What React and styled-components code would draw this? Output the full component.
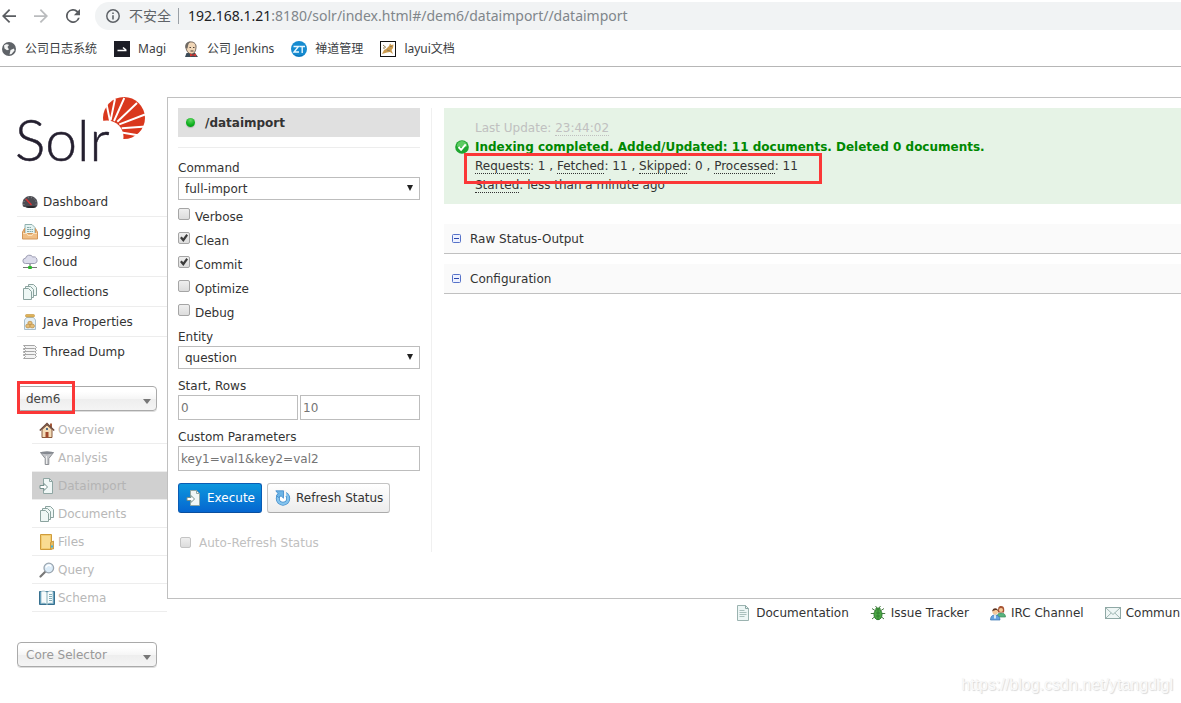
import React from "react";
import styled, { createGlobalStyle, css } from "styled-components";

const GlobalStyle = createGlobalStyle`
  *, *::before, *::after { box-sizing: border-box; }
  body {
    margin: 0;
    background: #fff;
    color: #333;
    font: 12px/16px "DejaVu Sans", Verdana, sans-serif;
    overflow-x: hidden;
  }
  a { color: inherit; text-decoration: none; }
  ul { list-style: none; margin: 0; padding: 0; }
  svg { display: block; flex: none; }
`;

/* ---------- browser chrome ---------- */

const Page = styled.div`
  position: relative;
  min-height: 100vh;
  overflow: hidden;
`;

const Toolbar = styled.header`
  display: flex;
  align-items: center;
  gap: 15px;
  height: 32px;
  padding-left: 2px;
`;

const NavButtons = styled.div`
  display: flex;
  gap: 18px;
`;

const ChromeButton = styled.button`
  width: 14px;
  height: 14px;
  padding: 0;
  border: 0;
  background: none;
  color: ${(p) => (p.disabled ? "#babcbe" : "#5a5d61")};
`;

const AddressBar = styled.div`
  display: flex;
  flex: 1;
  align-items: center;
  height: 28px;
  padding-left: 11px;
  border-radius: 14px 0 0 14px;
  background: #f1f3f4;
  color: #5f6368;
  font: 14px/20px "Noto Sans", "Noto Sans CJK SC", sans-serif;
  white-space: nowrap;
`;

const Insecure = styled.span`
  margin-left: 9px;
  padding-right: 7px;
`;

const Divider = styled.span`
  width: 1px;
  height: 16px;
  margin-right: 9px;
  background: #9aa0a6;
`;

const Url = styled.span`
  color: #80868b;
  b { color: #202124; font-weight: 400; }
`;

const Bookmarks = styled.nav`
  display: flex;
  align-items: center;
  gap: 17px;
  height: 35px;
  padding: 0 1px;
  border-bottom: 1px solid #b6b6b6;
  color: #3c4043;
  font: 12px/16px "Noto Sans", "Noto Sans CJK SC", sans-serif;
  white-space: nowrap;
`;

const Bookmark = styled.a`
  display: flex;
  align-items: center;
  gap: 8px;
`;

/* ---------- layout ---------- */

const Main = styled.div`
  display: flex;
  align-items: flex-start;
  padding: 30px 0 0 17px;
`;

const Sidebar = styled.aside`
  flex: none;
  width: 150px;
`;

const LogoLink = styled.a`
  display: block;
  height: 90px;
`;

const MenuItem = styled.li`
  height: 30px;
  border-bottom: 1px solid #ededed;
  &:last-child { border-bottom: 0; }
  a {
    display: flex;
    align-items: center;
    gap: 5px;
    height: 29px;
    padding-left: 5px;
  }
`;

const CorePicker = styled.div`
  position: relative;
  width: 140px;
  margin-top: ${(p) => p.$gap}px;
  &::after {
    content: "";
    position: absolute;
    right: 6px;
    top: 13px;
    border: 4px solid transparent;
    border-top: 5px solid #777;
    border-bottom: 0;
    pointer-events: none;
  }
`;

const CoreSelect = styled.select`
  display: block;
  width: 100%;
  height: 25px;
  padding: 0 8px;
  appearance: none;
  border: 1px solid #aaa;
  border-radius: 4px;
  background: linear-gradient(#fff 20%, #f6f6f6 50%, #eee 52%, #f4f4f4 100%);
  box-shadow: 0 1px 0 #ddd;
  color: ${(p) => (p.$muted ? "#999" : "#444")};
  font: inherit;
`;

const Highlight = styled.span`
  position: absolute;
  left: ${(p) => p.$left}px;
  top: ${(p) => p.$top}px;
  width: ${(p) => p.$width}px;
  height: ${(p) => p.$height}px;
  border: 3px solid #fb3737;
  pointer-events: none;
  z-index: 1;
`;

const SubMenu = styled.ul`
  margin: 5px 0 0 15px;
`;

const SubItem = styled.li`
  height: 28px;
  border-bottom: 1px solid #ededed;
  background: ${(p) => (p.$active ? "#d0d0d0" : "transparent")};
  color: ${(p) => (p.$active ? "#b4b4b4" : "#b8b8b8")};
  a {
    display: flex;
    align-items: center;
    gap: 3px;
    height: 27px;
    padding-left: 7px;
  }
`;

const ContentColumn = styled.div`
  flex: 1;
  min-width: 0;
`;

const Content = styled.main`
  display: flex;
  align-items: flex-start;
  padding: 10px 0 46px 10px;
  border: 1px solid #c0c0c0;
  border-right: 0;
`;

/* ---------- import form ---------- */

const Form = styled.form`
  flex: none;
  width: 254px;
  padding-right: 11px;
  border-right: 1px solid #f0f0f0;
`;

const Handler = styled.h1`
  display: flex;
  align-items: center;
  gap: 10px;
  height: 29px;
  margin: 0;
  padding-left: 8px;
  background: #e0e0e0;
  font-size: 12px;
  line-height: 16px;
`;

const Led = styled.span`
  width: 9px;
  height: 9px;
  border-radius: 50%;
  background: radial-gradient(circle at 50% 25%, #63d663, #0cae1d 60%, #078a14);
  box-shadow: 0 1px 1px #b5b5b5;
`;

const Rule = styled.hr`
  height: 1px;
  margin: 10px 0 9px;
  border: 0;
  background: #ededed;
`;

const Label = styled.label`
  display: block;
  margin-top: ${(p) => p.$gap || 0}px;
  padding-top: 2px;
  line-height: 18px;
`;

const SelectBox = styled.div`
  position: relative;
  &::after {
    content: "";
    position: absolute;
    right: 7px;
    top: 8px;
    border: 3px solid transparent;
    border-top: 6px solid #222;
    border-bottom: 0;
    pointer-events: none;
  }
`;

const field = css`
  display: block;
  width: 100%;
  border: 1px solid #bdbdbd;
  border-radius: 0;
  background: #fff;
  color: #333;
  font: inherit;
`;

const Select = styled.select`
  ${field}
  height: 23px;
  padding: 0 6px;
  appearance: none;
`;

const Input = styled.input`
  ${field}
  height: 25px;
  padding: 0 2px;
  &::placeholder { color: #757575; }
`;

const Pair = styled.div`
  display: flex;
  gap: 2px;
`;

const Checks = styled.div`
  padding: 4px 0 2px;
`;

const CheckRow = styled.label`
  display: flex;
  gap: 5px;
  height: 24px;
  line-height: 26px;
`;

const CheckBox = styled.input.attrs({ type: "checkbox" })`
  position: relative;
  flex: none;
  width: ${(p) => (p.$small ? 11 : 12)}px;
  height: ${(p) => (p.$small ? 11 : 12)}px;
  margin: ${(p) => (p.$small ? "0" : "4px 0 0")};
  appearance: none;
  border: 1px solid ${(p) => (p.$small ? "#c4c4c4" : "#a5a5a5")};
  border-radius: 2px;
  background: linear-gradient(#efefef, #dcdcdc);
  &:checked::after {
    content: "";
    position: absolute;
    inset: 1px;
    background: #3c3c3c;
    clip-path: polygon(0 50%, 22% 30%, 40% 52%, 80% 0, 100% 18%, 42% 100%);
  }
`;

const Actions = styled.div`
  display: flex;
  gap: 5px;
  margin-top: 12px;
`;

const Button = styled.button`
  display: flex;
  align-items: center;
  gap: 5px;
  height: 30px;
  padding: 0 6px 0 7px;
  border: 1px solid ${(p) => (p.$primary ? "#0a5cb4" : "#c4c4c4")};
  border-bottom-color: ${(p) => (p.$primary ? "#0a4f9e" : "#ababab")};
  border-radius: 3px;
  background: ${(p) => (p.$primary ? "linear-gradient(#0d97de, #0566d0)" : "linear-gradient(#fff, #ececec)")};
  color: ${(p) => (p.$primary ? "#fff" : "#333")};
  font: inherit;
  white-space: nowrap;
`;

const AutoRefresh = styled.label`
  display: flex;
  align-items: center;
  gap: 8px;
  height: 19px;
  margin-top: 20px;
  padding-left: 2px;
  color: #c0c0c0;
`;

/* ---------- status ---------- */

const Results = styled.section`
  flex: 1;
  min-width: 0;
  padding-left: 12px;
`;

const Status = styled.div`
  position: relative;
  margin-bottom: 20px;
  padding: 10px 10px 10px 11px;
  background: #e6f3e6;
`;

const StatusLine = styled.div`
  display: grid;
  grid-template-columns: 20px 1fr;
  align-items: center;
  height: 19px;
  color: ${(p) => p.$color || "#333"};
  font-weight: ${(p) => (p.$bold ? 700 : 400)};
  white-space: nowrap;
  span { grid-column: 2; }
  abbr {
    border-bottom: 1px dotted currentColor;
    text-decoration: none;
  }
`;

const Panel = styled.a`
  display: flex;
  align-items: center;
  gap: 8px;
  height: 30px;
  margin-bottom: 10px;
  padding-left: 7px;
  border-bottom: 1px solid #c0c0c0;
  background: #fafafa;
`;

const Footer = styled.footer`
  display: flex;
  justify-content: flex-end;
  gap: 21px;
  padding: 6px 1px 0 0;
  white-space: nowrap;
  a {
    display: flex;
    align-items: center;
    gap: 5px;
  }
`;

const Watermark = styled.div`
  position: absolute;
  right: 8px;
  top: 675px;
  color: #fafafa;
  font: 16px/20px "Liberation Sans", Arial, sans-serif;
  text-shadow: 1px 1px 1px #d9d9d9, 0 0 1px #ececec;
`;

/* ---------- icons ---------- */

const Svg = ({ size = 16, box = "0 0 16 16", children }) => (
  <svg width={size} height={size} viewBox={box} aria-hidden="true">{children}</svg>
);

const Sheet = ({ x = 0, y = 0 }) => (
  <path d={`M${x + 0.5} ${y + 0.5}h5l3 3v8h-8z`} fill="#eef7f5" stroke="#8ba39f" />
);

const icons = {
  dashboard: (
    <>
      <path d="M1 12.500C-1 7 3 2 8 2s9 5 7 10.500c-3 1.500-11 1.500-14 0z" fill="#4c4c52" />
      <path d="M2 11C1 6.500 4 3.500 8 3.500S15 6.500 14 11" fill="none" stroke="#8c8c92" strokeDasharray="1 2" />
      <path d="M4 5l5.500 6" stroke="#e03030" strokeWidth="1.400" />
      <ellipse cx="9" cy="13" rx="5" ry="1" fill="#28282c" />
    </>
  ),
  logging: (
    <>
      <path d="M3 .5h7l3 3v7H3z" fill="#e5f3f2" stroke="#8fb0ae" />
      <path d="M5 3.500h4M5 5.500h6M5 7.500h6" stroke="#86aaa8" strokeDasharray="2 .5" />
      <path d="M.5 8L2.500 4.500v5h11v-5l2 3.500v7H.5z" fill="#f0be84" stroke="#d2975a" />
      <path d="M1 9.500h4l1 2h4l1-2h4" fill="none" stroke="#fbe0bb" />
    </>
  ),
  cloud: (
    <>
      <path d="M3.500 9.500a2.600 2.600 0 0 1 0-5.200A4 4 0 0 1 10.800 3a3.300 3.300 0 0 1 1.700 6.500z" fill="#dcdceb" stroke="#9c9cb2" />
      <path d="M8 10v3" stroke="#555" />
      <path d="M1 13.500h14" stroke="#777" />
      <rect x="6" y="12" width="4" height="3" rx="1" fill="#2db52d" />
    </>
  ),
  documents: (
    <>
      <Sheet x={6} y={0} />
      <Sheet x={3} y={2} />
      <Sheet x={1} y={4} />
    </>
  ),
  java: (
    <>
      <path d="M4.500 3.500h7l2 2.500v9.500h-11V6z" fill="#e3eff6" stroke="#a9bfcc" />
      <rect x="3.500" y=".5" width="9" height="2.500" rx="1" fill="#dfb35a" stroke="#c2933d" strokeWidth=".6" />
      <ellipse cx="8" cy="9" rx="2.200" ry="1.700" fill="#e3bd77" stroke="#b98d46" strokeWidth=".7" />
      <ellipse cx="6" cy="12" rx="2.300" ry="1.900" fill="#e3bd77" stroke="#b98d46" strokeWidth=".7" />
      <ellipse cx="10.200" cy="12" rx="2.300" ry="1.900" fill="#e3bd77" stroke="#b98d46" strokeWidth=".7" />
    </>
  ),
  threads: (
    <g fill="#f3f3f3" stroke="#a5a5a5">
      {[1.5, 4.5, 7.5, 10.5].map((y) => (
        <path key={y} d={`M1.500 ${y}h11l2 2-2 2h-11l2-2z`} />
      ))}
    </g>
  ),
  overview: (
    <>
      <path d="M3 7.500v8h10v-8L8 3z" fill="#f3dcb8" stroke="#8a5a3c" />
      <path d="M11 1.500h2v4h-2z" fill="#a45a3a" />
      <path d="M.8 8.500L8 1.500l7.200 7" fill="none" stroke="#6d4a3c" strokeWidth="1.600" />
      <rect x="6.500" y="10" width="3" height="5.500" fill="#a1492c" />
      <rect x="7" y="6" width="2" height="2" fill="#536f8c" />
    </>
  ),
  analysis: (
    <>
      <path d="M1.500 2.500h13L9.800 8.500v6H6.200v-6z" fill="#c3c5c9" stroke="#8d9095" />
      <ellipse cx="8" cy="2.800" rx="6.500" ry="1.500" fill="#858990" />
      <path d="M7.500 6v8" stroke="#eee" />
    </>
  ),
  dataimport: (
    <>
      <path d="M4.500.5h6l3 3v12h-9z" fill="#f0f7f6" stroke="#8fa6a3" />
      <path d="M10.500.5v3h3" fill="none" stroke="#8fa6a3" />
      <path d="M1 7.500h4v-2L8.500 9 5 12.500v-2H1z" fill="#fff" stroke="#74908c" />
    </>
  ),
  files: (
    <>
      <path d="M1.500.5h11v15h-11z" fill="#f3cc70" stroke="#cf9c3c" />
      <path d="M3 2h8v12H3z" fill="#f9dc92" />
      <path d="M11.500 8.500l3-1.500v8h-3z" fill="#e8bd5e" stroke="#c3933a" strokeWidth=".8" />
      <path d="M12 12.500h2" stroke="#3db2e0" strokeWidth="2" />
    </>
  ),
  query: (
    <>
      <path d="M6.500 9.500l-5 5" stroke="#777" strokeWidth="2.200" strokeLinecap="round" />
      <circle cx="9.800" cy="6" r="4.800" fill="#dcecf8" stroke="#9ba6b0" strokeWidth="1.300" />
      <path d="M7 5.500c.8-2.300 3.500-3 5-1" fill="none" stroke="#fff" strokeWidth="1.500" />
    </>
  ),
  schema: (
    <>
      <path d="M.5 1.500h15v13H.5z" fill="#4e93b8" stroke="#37708f" />
      <path d="M2 1.500c3-1 5 0 6 1 1-1 3-2 6-1v12c-3-.7-5-.3-6 1-1-1.300-3-1.700-6-1z" fill="#f6fbfc" stroke="#8cb2c0" strokeWidth=".8" />
      <path d="M8 2.500v12M10 4.500h3M10 6.500h3M10 8.500h3M10 10.500h3" stroke="#83acb6" />
    </>
  ),
  refresh: (
    <>
      <circle cx="8" cy="8.500" r="5.200" fill="#fff" stroke="#3f89c9" strokeWidth="4" />
      <circle cx="8" cy="8.500" r="5.200" fill="none" stroke="#84c4ee" strokeWidth="2.600" />
      <path d="M8.200 0h3v6h-3z" fill="#f4f4f4" />
      <path d="M.8.8h7.700v7.400L6 5.800 3.500 7.500 1.500 5.500l1.500-2z" fill="#6cb4e6" stroke="#3f89c9" strokeWidth=".8" />
    </>
  ),
  success: (
    <>
      <circle cx="8" cy="8" r="7.800" fill="#1ea62f" />
      <path d="M2 7a6 6 0 0 1 12 0c-3 1.500-9 1.500-12 0z" fill="#5ccb62" />
      <path d="M4 8l3 3.300L12.200 5" fill="none" stroke="#fff" strokeWidth="2.200" />
    </>
  ),
  doc: (
    <>
      <path d="M2.500.5h8l3 3v12h-11z" fill="#edf6f5" stroke="#9bb3b0" />
      <path d="M10.500.5v3h3" fill="none" stroke="#8aa6a3" />
      <path d="M4.500 5.500h5M4.500 7.500h7M4.500 9.500h7M4.500 11.500h5" stroke="#a9bfbc" />
    </>
  ),
  bug: (
    <>
      <path d="M2 3.500l3 2M14 3.500l-3 2M.8 8.500H4M15.200 8.500H12M2 14l3-2.500M14 14l-3-2.500M5.500 1L7 3M10.500 1L9 3" stroke="#4a7a45" />
      <ellipse cx="8" cy="9.500" rx="4" ry="5.200" fill="#4ba744" stroke="#2d7a30" />
      <path d="M5 4.800c0-3 6-3 6 0z" fill="#3b8c38" />
      <path d="M8 5v9.500M6 8h4M6 11h4" stroke="#2d7a30" strokeWidth=".8" />
    </>
  ),
  people: (
    <>
      <path d="M7.500 12c-.5-3 1-4 3.500-4s4.500 1 4.500 4z" fill="#58b47f" stroke="#3b8d5d" strokeWidth=".7" />
      <path d="M8 7.500c0-4 0-6.500 3.200-6.500S14.500 4 14 7.500z" fill="#a75332" />
      <circle cx="11" cy="5" r="2" fill="#f5ca9b" />
      <path d="M.5 15c0-3.500 1.500-5 4.500-5s5 1.500 5 5z" fill="#65a2df" stroke="#3873af" strokeWidth=".7" />
      <circle cx="5.200" cy="6.800" r="2.800" fill="#f5ca9b" />
      <path d="M2.200 6.500c0-4.500 6-4.500 6 0-1-2-3-2-6 0z" fill="#5e3420" />
      <path d="M5 10v3.500" stroke="#fff" strokeWidth="1.500" />
    </>
  ),
  mail: (
    <>
      <rect x=".5" y="2.500" width="15" height="11" fill="#eff6f5" stroke="#8fa8a5" />
      <path d="M1 3l7 6.500L15 3M1 13l5.200-5M15 13L9.800 8" fill="none" stroke="#9fb6b3" />
    </>
  ),
  globe: (
    <>
      <circle cx="8" cy="8" r="7" fill="#5f6368" />
      <path d="M3 4.500c2-2 4-1.500 5-.5L6.500 6 8 8.500l-2 .7L3.500 7.500zM9.500 9l3.500-1.500.5 2-3 3.500-2 .5.500-2z" fill="#f4f5f5" />
    </>
  ),
  magi: (
    <>
      <rect width="16" height="16" fill="#1c1d25" />
      <path d="M3.500 9.500h9M9 6.500l3 2.500" fill="none" stroke="#fff" strokeWidth="1.600" />
    </>
  ),
  jenkins: (
    <>
      <path d="M2 16l1.500-4h8.500l3 4z" fill="#3c4b57" />
      <path d="M3 7c-1-8 11-8 10-.5-.2 3-1.500 6.500-4.500 6.500S3.500 10 3 7z" fill="#f0d6b7" stroke="#4f4138" strokeWidth=".8" />
      <path d="M2.500 7C1.500 2 5 .5 8 .6 5 2 5.500 4 4.500 7.500z" fill="#6f6a64" />
      <path d="M6.500 6.500h1.500M10 6.500h1.500M7.500 10h3" stroke="#4f4138" />
      <path d="M7 12.500l3 1.200 3-1.200v3l-3-1-3 1z" fill="#d33833" />
    </>
  ),
  zentao: (
    <>
      <circle cx="8" cy="8" r="8" fill="#168bd0" />
      <path d="M2 12.500a8 8 0 0 0 12 0A9 9 0 0 1 2 12.500z" fill="#075a9e" />
      <path d="M2.500 5.500h5L3 11h5M8.500 5.500h5.500M11.200 5.500V12" fill="none" stroke="#e8f7ff" strokeWidth="1.400" />
    </>
  ),
  layui: (
    <>
      <rect x=".5" y=".5" width="15" height="15" fill="#fff" stroke="#111" />
      <path d="M2 13l2-4 2-1 3-3 1-2.500 1.500 1.500 2-.5-.5 3.500-1.500 2 1.500 4-3-2-3 .5z" fill="#cb9b4e" />
      <path d="M3 4l3 2.500M3 7h2M10 5.500h2M7 9l3 1" stroke="#8d7a52" />
    </>
  ),
};

const Icon = ({ name, size }) => <Svg size={size}>{icons[name]}</Svg>;

const ARROW = "M20 11H7.830l5.590-5.590L12 4l-8 8 8 8 1.410-1.410L7.830 13H20z";

const Logo = () => (
  <svg width="130" height="80" viewBox="0 0 130 80" role="img" aria-label="Solr">
    <circle cx="107" cy="21" r="21" fill="#d9381e" />
    <circle cx="90" cy="40" r="16.500" fill="#fff" />
    <path
      d="M89.700 8L93 24M98 2L93.700 23M107.300 1L97 24M120 6L100.300 24.700M128 17.500L102.300 27.300M129 29.500L104.700 31.300M121 38.200L103 35.300"
      stroke="#fff"
      strokeWidth="1.900"
    />
    <text
      x="-2"
      y="64"
      fontFamily="Lato, sans-serif"
      fontWeight="300"
      fontSize="57"
      fill="#241f2f"
      stroke="#241f2f"
      strokeWidth=".5"
    >
      Solr
    </text>
  </svg>
);

/* ---------- data ---------- */

const bookmarks = [
  ["globe", "公司日志系统"],
  ["magi", "Magi"],
  ["jenkins", "公司 Jenkins"],
  ["zentao", "禅道管理"],
  ["layui", "layui文档"],
];

const menu = [
  ["dashboard", "Dashboard"],
  ["logging", "Logging"],
  ["cloud", "Cloud"],
  ["documents", "Collections"],
  ["java", "Java Properties"],
  ["threads", "Thread Dump"],
];

const coreMenu = [
  ["overview", "Overview"],
  ["analysis", "Analysis"],
  ["dataimport", "Dataimport"],
  ["documents", "Documents"],
  ["files", "Files"],
  ["query", "Query"],
  ["schema", "Schema"],
];

const options = [
  ["Verbose", false],
  ["Clean", true],
  ["Commit", true],
  ["Optimize", false],
  ["Debug", false],
];

const footerLinks = [
  ["doc", "Documentation"],
  ["bug", "Issue Tracker"],
  ["people", "IRC Channel"],
  ["mail", "Commun"],
];

export default function App() {
  return (
    <Page>
      <GlobalStyle />
      <Toolbar>
        <NavButtons>
          <ChromeButton aria-label="Back">
            <Svg size={14} box="4 4 16 16"><path d={ARROW} fill="currentColor" /></Svg>
          </ChromeButton>
          <ChromeButton aria-label="Forward" disabled>
            <Svg size={14} box="4 4 16 16"><path d={ARROW} fill="currentColor" transform="rotate(180 12 12)" /></Svg>
          </ChromeButton>
          <ChromeButton aria-label="Reload">
            <Svg size={14} box="4 4 16 16">
              <path d="M17.650 6.350A8 8 0 1 0 19.730 14h-2.080A6 6 0 1 1 12 6c1.660 0 3.140.69 4.220 1.780L13 11h7V4z" fill="currentColor" />
            </Svg>
          </ChromeButton>
        </NavButtons>
        <AddressBar>
          <Svg size={14}>
            <circle cx="8" cy="8" r="7.100" fill="none" stroke="#5f6368" strokeWidth="1.700" />
            <path d="M8 7v5M8 4v1.800" stroke="#5f6368" strokeWidth="1.800" />
          </Svg>
          <Insecure>不安全</Insecure>
          <Divider />
          <Url><b>192.168.1.21</b>:8180/solr/index.html#/dem6/dataimport//dataimport</Url>
        </AddressBar>
      </Toolbar>
      <Bookmarks aria-label="Bookmarks">
        {bookmarks.map(([icon, text]) => (
          <Bookmark key={text} href="#"><Icon name={icon} />{text}</Bookmark>
        ))}
      </Bookmarks>

      <Main>
        <Sidebar>
          <LogoLink href="#"><Logo /></LogoLink>
          <ul>
            {menu.map(([icon, text]) => (
              <MenuItem key={text}><a href="#"><Icon name={icon} />{text}</a></MenuItem>
            ))}
          </ul>
          <CorePicker $gap={19}>
            <CoreSelect aria-label="Core" defaultValue="dem6"><option>dem6</option></CoreSelect>
            <Highlight $left={0} $top={-5} $width={58} $height={33} />
          </CorePicker>
          <SubMenu>
            {coreMenu.map(([icon, text]) => (
              <SubItem key={text} $active={text === "Dataimport"}>
                <a href="#"><Icon name={icon} />{text}</a>
              </SubItem>
            ))}
          </SubMenu>
          <CorePicker $gap={30}>
            <CoreSelect aria-label="Core Selector" $muted><option>Core Selector</option></CoreSelect>
          </CorePicker>
        </Sidebar>

        <ContentColumn>
          <Content>
            <Form onSubmit={(e) => e.preventDefault()}>
              <Handler><Led />/dataimport</Handler>
              <Rule />
              <Label htmlFor="command">Command</Label>
              <SelectBox><Select id="command"><option>full-import</option></Select></SelectBox>
              <Checks>
                {options.map(([text, on]) => (
                  <CheckRow key={text}><CheckBox defaultChecked={on} />{text}</CheckRow>
                ))}
              </Checks>
              <Label htmlFor="entity">Entity</Label>
              <SelectBox><Select id="entity"><option>question</option></Select></SelectBox>
              <Label htmlFor="start" $gap={6}>Start, Rows</Label>
              <Pair>
                <Input id="start" placeholder="0" />
                <Input aria-label="Rows" placeholder="10" />
              </Pair>
              <Label htmlFor="custom" $gap={6}>Custom Parameters</Label>
              <Input id="custom" placeholder="key1=val1&key2=val2" />
              <Actions>
                <Button type="submit" $primary><Icon name="dataimport" />Execute</Button>
                <Button type="button"><Icon name="refresh" />Refresh Status</Button>
              </Actions>
              <AutoRefresh><CheckBox $small />Auto-Refresh Status</AutoRefresh>
            </Form>

            <Results>
              <Status>
                <StatusLine $color="#c0c0c0"><span>Last Update: <abbr>23:44:02</abbr></span></StatusLine>
                <StatusLine $color="#080" $bold>
                  <Icon name="success" size={14} />
                  <span>Indexing completed. Added/Updated: 11 documents. Deleted 0 documents.</span>
                </StatusLine>
                <StatusLine>
                  <span>
                    <abbr>Requests</abbr>: 1 , <abbr>Fetched</abbr>: 11 , <abbr>Skipped</abbr>: 0 , <abbr>Processed</abbr>: 11
                  </span>
                </StatusLine>
                <StatusLine><span><abbr>Started</abbr>: less than a minute ago</span></StatusLine>
                <Highlight $left={20} $top={45} $width={358} $height={31} />
              </Status>
              {["Raw Status-Output", "Configuration"].map((text) => (
                <Panel key={text} href="#">
                  <Svg size={11} box="0 0 11 11">
                    <rect x="1.500" y="1.500" width="8" height="8" rx="1" fill="#eef2ff" stroke="#5672c9" />
                    <path d="M3 5.500h5" stroke="#2b49ad" />
                  </Svg>
                  {text}
                </Panel>
              ))}
            </Results>
          </Content>
          <Footer>
            {footerLinks.map(([icon, text]) => (
              <a key={text} href="#"><Icon name={icon} />{text}</a>
            ))}
          </Footer>
        </ContentColumn>
      </Main>
      <Watermark>https://blog.csdn.net/ytangdigl</Watermark>
    </Page>
  );
}
